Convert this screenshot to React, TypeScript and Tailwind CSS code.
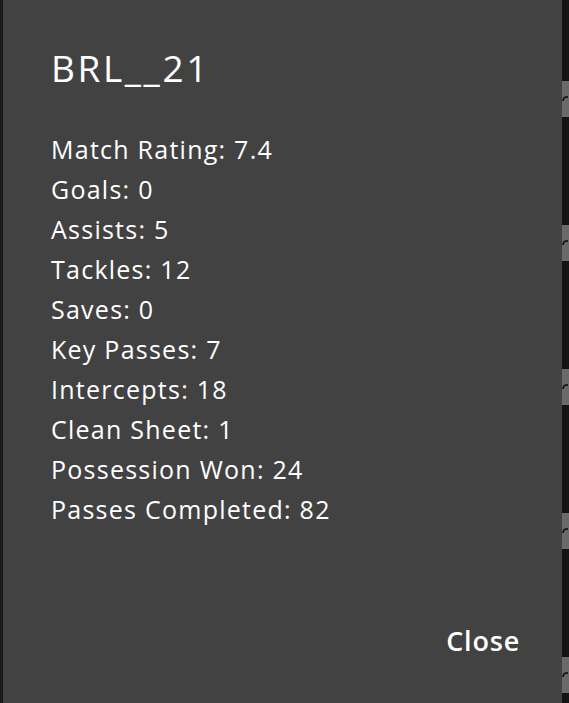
const stats: [string, string][] = [
  ["Match Rating", "7.4"],
  ["Goals", "0"],
  ["Assists", "5"],
  ["Tackles", "12"],
  ["Saves", "0"],
  ["Key Passes", "7"],
  ["Intercepts", "18"],
  ["Clean Sheet", "1"],
  ["Possession Won", "24"],
  ["Passes Completed", "82"],
];

function EdgeStrip() {
  return (
    <div className="flex w-[7px] flex-col bg-[#141414] pt-[81px]">
      {[0, 1, 2, 3, 4].map((i) => (
        <div key={i} className="mb-[108px] h-[36px] shrink-0 bg-[#6a6a6a] pt-[15px]">
          <div className="h-[5px] w-[6px] rounded-tl-full border-t-2 border-l-2 border-[#1e1e1e]" />
        </div>
      ))}
    </div>
  );
}

export default function App() {
  return (
    <div className="flex h-[703px] w-[569px] overflow-hidden bg-[#141414]">
      <div className="w-[3px] bg-[#1b1b1b]" />
      <div
        className="flex flex-1 flex-col bg-[#424242] px-12 pt-[44px] pb-[40px] text-white"
        style={{ fontFamily: '"Open Sans", sans-serif' }}
      >
        <h2 className="text-[37px] leading-[48px] font-normal tracking-[0.07em]">BRL__21</h2>
        <ul className="mt-[37px] text-[25px] leading-[40px] tracking-[0.05em]">
          {stats.map(([label, value]) => (
            <li key={label}>
              {label}: {value}
            </li>
          ))}
        </ul>
        <div className="mt-auto flex justify-end">
          <button className="-mr-[14px] px-2 py-1 text-[27px] font-semibold leading-[36px] tracking-[0.03em] text-white">
            Close
          </button>
        </div>
      </div>
      <EdgeStrip />
    </div>
  );
}
